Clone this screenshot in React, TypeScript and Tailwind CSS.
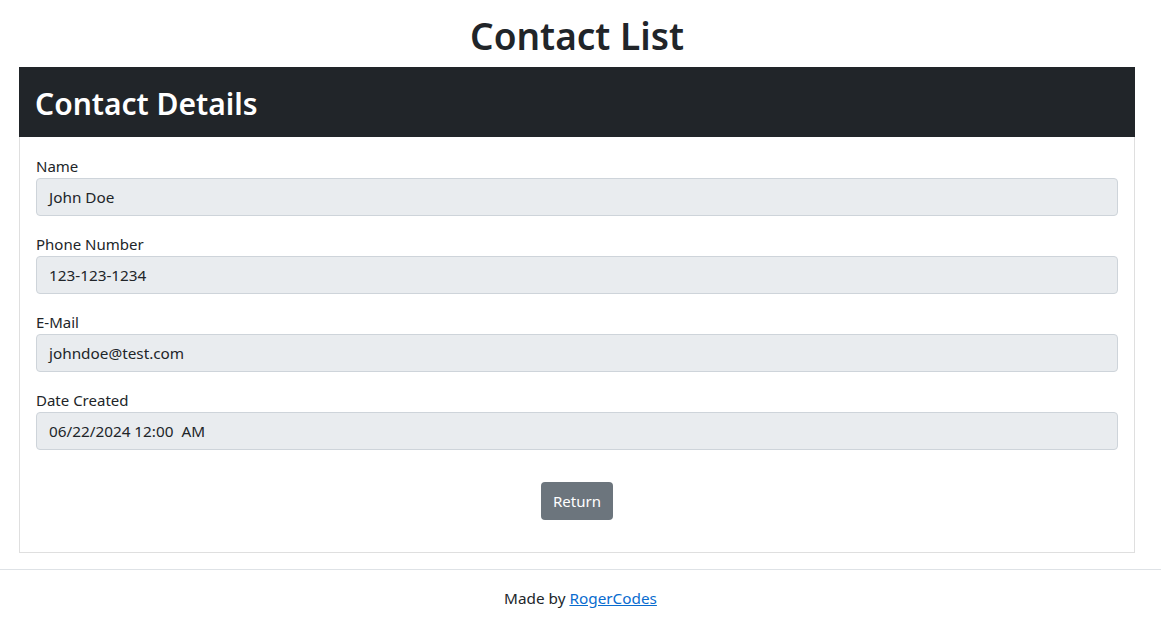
import React from "react";

const fields = [
  { label: "Name", value: "John Doe" },
  { label: "Phone Number", value: "123-123-1234" },
  { label: "E-Mail", value: "johndoe@test.com" },
  { label: "Date Created", value: "06/22/2024 12:00\u00a0 AM" },
];

export default function App() {
  return (
    <div
      className="min-h-screen bg-white text-[#212529]"
      style={{ fontFamily: '"Noto Sans", "Open Sans", sans-serif' }}
    >
      <div className="ml-[19px] w-[1116px]">
        <h1 className="text-center text-[37px] font-semibold leading-[48px] pt-[12px] pb-[7px]">
          Contact List
        </h1>
        <div className="border border-[#dfdfdf]">
          <div className="bg-[#212529] h-[70px] -mx-px -mt-px flex items-center px-[16px] pt-[3px]">
            <h2 className="text-white text-[30px] font-semibold leading-none">Contact Details</h2>
          </div>
          <div className="px-[16px] pt-[17px] pb-[32px]">
            {fields.map((f) => (
              <div key={f.label} className="mb-[16px]">
                <label className="block text-[15px] leading-[24px]">{f.label}</label>
                <div className="h-[38px] bg-[#e9ecef] border border-[#ced4da] rounded-[4px] px-[12px] flex items-center text-[15.3px]">
                  {f.value}
                </div>
              </div>
            ))}
            <div className="flex justify-center pt-[16px]">
              <button className="h-[38px] w-[72px] bg-[#6c757d] text-white rounded-[4px] text-[15px]">
                Return
              </button>
            </div>
          </div>
        </div>
      </div>
      <div className="mt-[16px] border-t border-[#dee2e6] pt-[16px] text-center text-[15.3px] leading-[24px]">
        Made by{" "}
        <a href="#" className="text-[#0a6ccf] underline">
          RogerCodes
        </a>
      </div>
    </div>
  );
}
